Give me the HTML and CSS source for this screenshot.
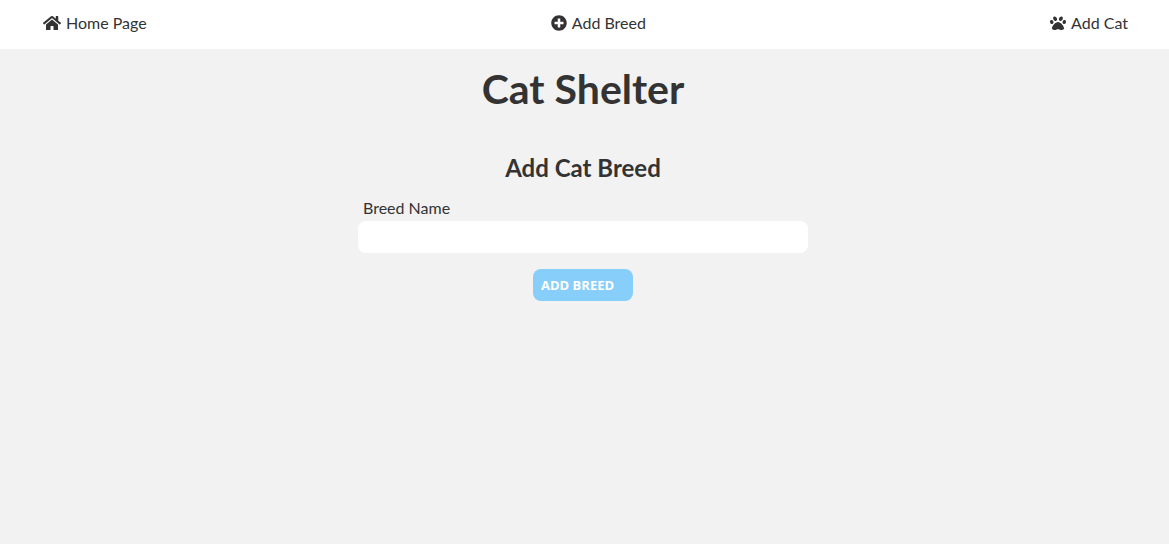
FILE: index.html
```html
<!DOCTYPE html>
<html lang="en">
<head>
<meta charset="utf-8">
<meta name="viewport" content="width=device-width, initial-scale=1">
<title>Cat Shelter</title>
<link rel="stylesheet" href="styles.css">
</head>
<body>
<header>
  <nav class="navigation">
    <a class="nav-link" href="#home"><svg class="icon icon-wide" viewBox="0 0 576 512" aria-hidden="true"><path d="M280.37 148.26L96 300.11V464a16 16 0 0 0 16 16l112.06-.29a16 16 0 0 0 15.92-16V368a16 16 0 0 1 16-16h64a16 16 0 0 1 16 16v95.64a16 16 0 0 0 16 16.05L464 480a16 16 0 0 0 16-16V300L295.67 148.26a12.19 12.19 0 0 0-15.3 0zM571.6 251.47L488 182.56V44.05a12 12 0 0 0-12-12h-56a12 12 0 0 0-12 12v72.61L318.47 43a48 48 0 0 0-61 0L4.34 251.47a12 12 0 0 0-1.6 16.9l25.5 31A12 12 0 0 0 45.15 301l235.22-193.74a12.19 12.19 0 0 1 15.3 0L530.9 301a12 12 0 0 0 16.9-1.6l25.5-31a12 12 0 0 0-1.7-16.93z"/></svg>Home Page</a>
    <a class="nav-link" href="#add-breed"><svg class="icon" viewBox="0 0 512 512" aria-hidden="true"><path d="M256 8C119 8 8 119 8 256s111 248 248 248 248-111 248-248S393 8 256 8zm144 276c0 6.600-5.400 12-12 12h-92v92c0 6.600-5.400 12-12 12h-56c-6.600 0-12-5.400-12-12v-92h-92c-6.600 0-12-5.400-12-12v-56c0-6.600 5.400-12 12-12h92v-92c0-6.600 5.400-12 12-12h56c6.600 0 12 5.400 12 12v92h92c6.600 0 12 5.400 12 12v56z"/></svg>Add Breed</a>
    <a class="nav-link" href="#add-cat"><svg class="icon" viewBox="0 0 512 512" aria-hidden="true"><path d="M256 224c-79.41 0-192 122.76-192 200.25 0 34.9 26.81 55.75 71.74 55.75 48.84 0 81.09-25.08 120.26-25.08 39.51 0 71.85 25.08 120.26 25.08 44.93 0 71.74-20.85 71.74-55.75C448 346.76 335.41 224 256 224zm-147.28-12.61c-10.4-34.65-42.44-57.09-71.56-50.13-29.12 6.96-44.29 40.69-33.89 75.34 10.4 34.65 42.44 57.09 71.56 50.13 29.12-6.96 44.29-40.69 33.89-75.34zm84.72-20.78c30.94-8.14 42.93-46.04 26.78-84.66s-54.32-63.28-85.26-55.14c-30.94 8.14-42.92 46.04-26.78 84.66 16.15 38.61 54.33 63.3 85.26 55.14zm281.39-29.34c-29.12-6.96-61.15 15.48-71.56 50.13-10.4 34.65 4.77 68.38 33.89 75.34 29.12 6.96 61.15-15.48 71.56-50.13 10.4-34.65-4.77-68.38-33.89-75.34zm-156.27 29.34c30.94 8.16 69.11-16.52 85.26-55.14 16.15-38.62 4.16-76.52-26.78-84.66-30.94-8.14-69.11 16.52-85.26 55.14-16.16 38.62-4.17 76.52 26.78 84.66z"/></svg>Add Cat</a>
  </nav>
</header>
<main>
  <h1 class="site-title">Cat Shelter</h1>
  <form class="breed-form">
    <h2 class="form-title">Add Cat Breed</h2>
    <label class="form-label" for="breed-name">Breed Name</label>
    <input class="form-input" id="breed-name" name="breed" type="text">
    <button class="form-button" type="submit">ADD BREED</button>
  </form>
</main>
</body>
</html>
```

FILE: styles.css
```css
* {
  box-sizing: border-box;
}

body {
  margin: 0;
  background: #f2f2f2;
  color: #333;
  font-family: Lato, sans-serif;
  font-size: 16px;
  line-height: 24px;
}

.navigation {
  display: flex;
  justify-content: space-between;
  padding: 11px 41px 14px 43px;
  background: #fff;
}

.nav-link {
  display: flex;
  align-items: center;
  gap: 5px;
  color: inherit;
  text-decoration: none;
}

.icon {
  width: 16px;
  height: 16px;
  fill: currentColor;
}

.icon-wide {
  width: 18px;
}

main {
  padding: 16px 3px 16px 0;
}

.site-title {
  margin: 0 0 40px;
  font-size: 41px;
  line-height: 48px;
  text-align: center;
}

.breed-form {
  display: flex;
  flex-direction: column;
  max-width: 450px;
  margin: 0 auto;
}

.form-title {
  margin: 0 0 13px;
  font-size: 24px;
  line-height: 30px;
  text-align: center;
}

.form-label {
  padding: 0 5px 1px;
}

.form-input {
  width: 100%;
  height: 32px;
  padding: 0 8px;
  border: 0;
  border-radius: 8px;
  background: #fff;
  font: inherit;
}

.form-button {
  width: 100px;
  height: 32px;
  margin: 16px auto 0;
  padding: 0 8px;
  border: 0;
  border-radius: 8px;
  background: #87cefa;
  color: #fff;
  font-family: "Open Sans", sans-serif;
  font-size: 13px;
  font-weight: 700;
  text-align: left;
}
```
